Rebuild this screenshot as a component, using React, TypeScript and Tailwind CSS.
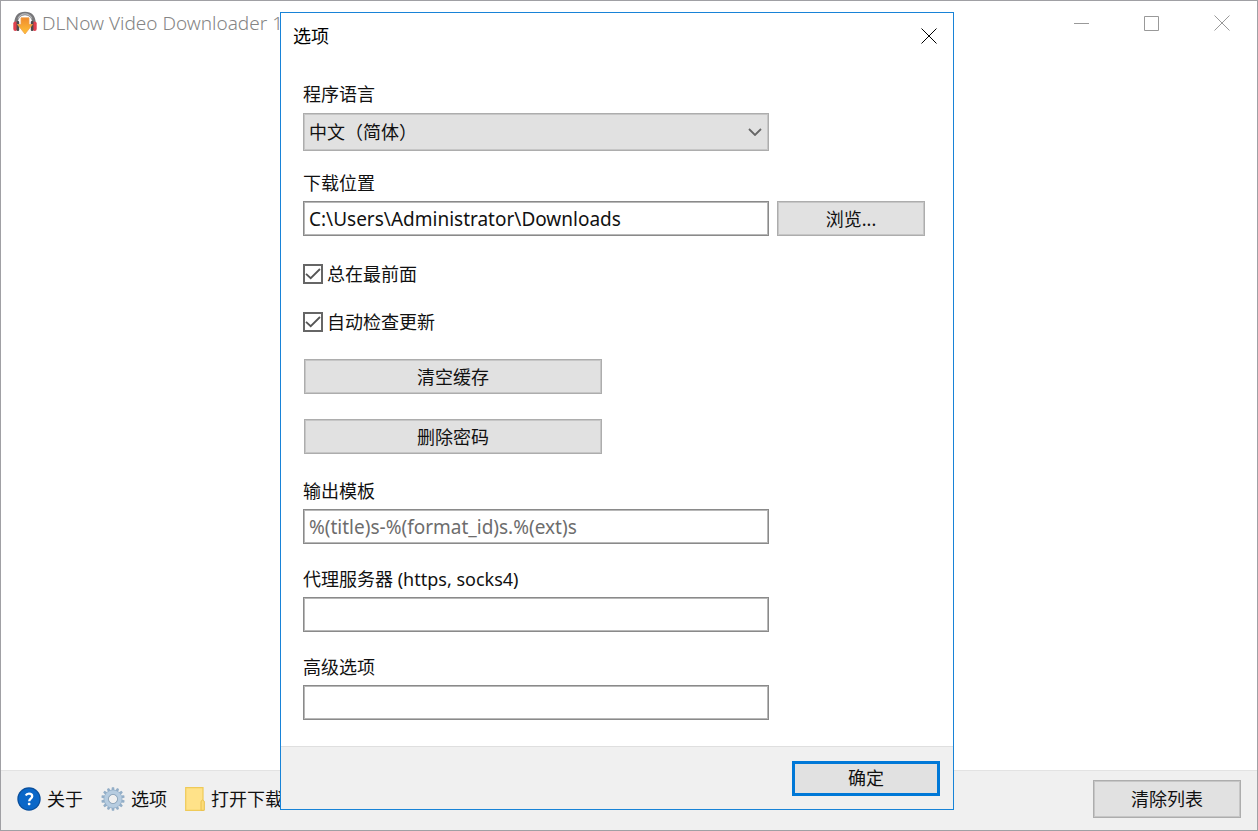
import type { ReactNode } from "react";

const font = "font-['Noto_Sans','Noto_Sans_CJK_SC',sans-serif]";
const grayBorder = "border border-[#adadad] shadow-[inset_0_0_0_1px_#c6c6c6]";

const AppLogo = () => (
  <svg viewBox="0 0 24 24" className="w-6 h-6 shrink-0">
    <defs>
      <linearGradient id="arrow" x1="0" y1="0" x2="0" y2="1">
        <stop offset="0" stopColor="#f08a2c" />
        <stop offset="1" stopColor="#ffc338" />
      </linearGradient>
    </defs>
    <path d="M3 12C3.500 5 7 2.500 12 2.500s8.500 2.500 9 9.500" fill="none" stroke="#77777a" strokeWidth="3.600" />
    <path d="M5 7.500C7 4 9 2.800 12 2.800s5 1.200 7 4.700" fill="none" stroke="#b9b9bc" strokeWidth="1.200" />
    <rect x="0.300" y="10.500" width="4" height="9.500" rx="2" fill="#e0404e" />
    <rect x="19.700" y="10.500" width="4" height="9.500" rx="2" fill="#e0404e" />
    <rect x="3.600" y="10" width="2.600" height="10" rx="1" fill="#4a4a4d" />
    <rect x="17.800" y="10" width="2.600" height="10" rx="1" fill="#4a4a4d" />
    <path
      d="M8 6.800h8v6.700h3.500L12 23l-7.500-9.500H8z"
      fill="url(#arrow)"
      stroke="#f0a04a"
      strokeWidth="0.800"
      strokeLinejoin="round"
    />
  </svg>
);

const HelpIcon = () => (
  <svg viewBox="0 0 24 24" className="w-6 h-6 shrink-0">
    <circle cx="12" cy="12" r="11.700" fill="#0a4f9c" />
    <circle cx="12" cy="12" r="10.500" fill="#0a67c8" />
    <path
      d="M8.800 8.600c.6-1.300 1.700-1.900 3.100-1.900 2 0 3.300 1 3.300 2.600 0 2.400-3 2.500-3 5"
      fill="none"
      stroke="#fff"
      strokeWidth="2.300"
    />
    <rect x="10.900" y="15.800" width="2.500" height="2.500" rx="0.800" fill="#fff" />
  </svg>
);

const teeth = Array.from({ length: 14 }, (_, i) => (i * 360) / 14);

const GearIcon = () => (
  <svg viewBox="0 0 24 24" className="w-6 h-6 shrink-0">
    <g fill="#93aec7">
      {teeth.map((a) => (
        <path key={a} d="M10.900 0.300h2.200l.7 4h-3.600z" transform={`rotate(${a} 12 12)`} />
      ))}
    </g>
    <circle cx="12" cy="12" r="6.700" fill="none" stroke="#93afc8" strokeWidth="5" />
    <circle cx="12" cy="12" r="6.700" fill="none" stroke="#b6cce0" strokeWidth="4" />
    <circle cx="12" cy="12" r="4.600" fill="none" stroke="#93a9bd" strokeWidth="1" />
  </svg>
);

const FolderIcon = () => (
  <svg viewBox="0 0 20 24" className="w-5 h-6 shrink-0">
    <path d="M.7.700h17.300v22.600H.7z" fill="#ffe289" stroke="#efca58" strokeWidth="1.200" />
    <path
      d="M16 23.300v-9l1.500-1.300 1.800 1.300v9z"
      fill="#fddc78"
      stroke="#e8c04e"
      strokeWidth="1"
    />
  </svg>
);

const CloseIcon = () => (
  <svg viewBox="0 0 16 16" className="w-4 h-4" fill="none" stroke="currentColor">
    <path d="M.5.5l15 15M15.500.5l-15 15" />
  </svg>
);

interface ButtonProps {
  className?: string;
  children: ReactNode;
}

const Button = ({ className = "", children }: ButtonProps) => (
  <button
    type="button"
    className={`flex items-center justify-center bg-[#e1e1e1] ${className}`}
  >
    {children}
  </button>
);

interface FieldProps {
  id: string;
  label: string;
  value?: string;
  placeholder?: string;
  children?: ReactNode;
}

const Field = ({ id, label, value, placeholder, children }: FieldProps) => (
  <div>
    <label htmlFor={id} className="block mb-[6px]">
      {label}
    </label>
    <div className="grid grid-cols-[1fr_148px] gap-x-2">
      <input
        id={id}
        type="text"
        defaultValue={value}
        placeholder={placeholder}
        className="w-full min-w-0 h-[35px] px-[5px] text-[19px] bg-white border border-[#8a8a8a] shadow-[inset_0_0_0_1px_#b8b8b8] outline-none placeholder:text-[#6d6d6d]"
      />
      {children}
    </div>
  </div>
);

const Check = ({ id, label }: { id: string; label: string }) => (
  <div className="flex items-center h-6">
    <span className="relative flex w-5 h-5 mr-1">
      <input
        id={id}
        type="checkbox"
        defaultChecked
        className="w-5 h-5 bg-white border-2 appearance-none peer border-[#666]"
      />
      <svg
        viewBox="0 0 20 20"
        className="absolute inset-0 hidden pointer-events-none peer-checked:block"
        fill="none"
        stroke="#555"
        strokeWidth="1.800"
      >
        <path d="M3 9.800l4.700 4.400 9.300-9.200" />
      </svg>
    </span>
    <label htmlFor={id}>{label}</label>
  </div>
);

const OptionsDialog = () => (
  <div className="fixed inset-0 flex items-start justify-center pt-3 pr-6">
    <div
      role="dialog"
      aria-labelledby="dialog-title"
      className="w-[674px] bg-white border border-[#1883d7]"
    >
      <div className="flex items-center justify-between h-[45px] pl-3 pr-4">
        <h2 id="dialog-title" className="text-black">
          选项
        </h2>
        <button type="button" aria-label="关闭" className="text-black">
          <CloseIcon />
        </button>
      </div>

      <form className="pl-[22px] pr-7 pt-6 pb-[26px]">
        <label htmlFor="language" className="block mb-[7px]">
          程序语言
        </label>
        <div className="grid grid-cols-[1fr_148px] gap-x-2 mb-5">
          <div className="relative">
            <select
              id="language"
              className={`w-full h-[38px] px-[5px] bg-[#e1e1e1] appearance-none outline-none ${grayBorder}`}
            >
              <option>中文（简体）</option>
            </select>
            <svg
              viewBox="0 0 14 8"
              className="absolute w-[14px] h-2 pointer-events-none right-[7px] top-[15px]"
              fill="none"
              stroke="#666"
              strokeWidth="1.800"
            >
              <path d="M1 1l6 6 6-6" />
            </svg>
          </div>
        </div>

        <Field id="location" label="下载位置" value="C:\Users\Administrator\Downloads">
          <Button className={`h-[35px] ${grayBorder}`}>浏览...</Button>
        </Field>

        <div className="flex flex-col gap-6 pt-[26px] pb-[25px]">
          <Check id="on-top" label="总在最前面" />
          <Check id="auto-update" label="自动检查更新" />
        </div>

        <div className="flex flex-col gap-[25px] w-[299px] pl-px mb-[25px]">
          <Button className={`h-[35px] ${grayBorder}`}>清空缓存</Button>
          <Button className={`h-[35px] ${grayBorder}`}>删除密码</Button>
        </div>

        <div className="flex flex-col gap-[23px]">
          <Field id="template" label="输出模板" placeholder="%(title)s-%(format_id)s.%(ext)s" />
          <Field id="proxy" label="代理服务器 (https, socks4)" />
          <Field id="advanced" label="高级选项" />
        </div>
      </form>

      <div className="flex items-center justify-end h-[63px] pr-[13px] bg-[#f0f0f0] border-t border-[#dfdfdf]">
        <Button className="w-[148px] h-[35px] border-3 border-[#0078d7]">确定</Button>
      </div>
    </div>
  </div>
);

export default function App() {
  return (
    <div
      className={`flex flex-col min-h-screen bg-white border border-[#a0a0a4] text-lg leading-6 text-[#111] ${font}`}
    >
      <header className="flex items-center justify-between h-11 pl-3 pr-[27px] text-[#999]">
        <div className="flex items-center gap-[5px]">
          <AppLogo />
          <h1 className="text-[19px] font-light whitespace-nowrap text-[#858585]">
            DLNow Video Downloader 1
          </h1>
        </div>
        <div className="flex items-center gap-[54px]">
          <button type="button" aria-label="最小化">
            <svg viewBox="0 0 16 16" className="w-4 h-4" fill="none" stroke="currentColor">
              <path d="M0 8.500h15" />
            </svg>
          </button>
          <button type="button" aria-label="最大化">
            <svg viewBox="0 0 16 16" className="w-4 h-4" fill="none" stroke="currentColor">
              <path d="M.5 1.500h14v14H.5z" />
            </svg>
          </button>
          <button type="button" aria-label="关闭">
            <CloseIcon />
          </button>
        </div>
      </header>

      <main className="flex-1" />

      <footer className="flex items-center justify-between h-[60px] px-4 pb-[3px] bg-[#f0f0f0] border-t border-[#e3e3e3]">
        <div className="flex items-center gap-[18px]">
          <button type="button" className="flex items-center gap-[6px]">
            <HelpIcon />
            关于
          </button>
          <button type="button" className="flex items-center gap-[6px]">
            <GearIcon />
            选项
          </button>
          <button type="button" className="flex items-center gap-[6px]">
            <FolderIcon />
            打开下载
          </button>
        </div>
        <Button className={`w-[148px] h-[38px] ${grayBorder}`}>清除列表</Button>
      </footer>

      <OptionsDialog />
    </div>
  );
}
